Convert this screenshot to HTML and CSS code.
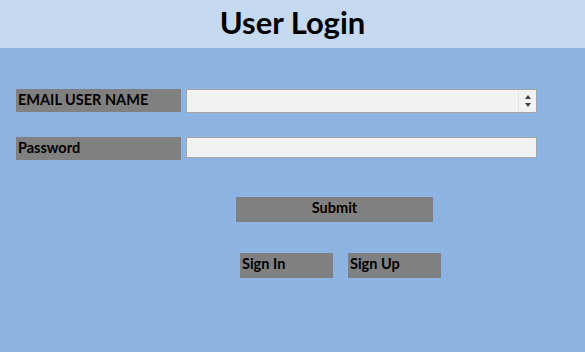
FILE: index.html
```html
<!DOCTYPE html>
<html lang="en">
<head>
    <meta charset="UTF-8">
    <meta name="viewport" content="width=device-width, initial-scale=1.0">
    <title>User Login</title>
    <link rel="stylesheet" href="styles.css">
</head>
<body>

    <div class="header">
        <h1>User Login</h1>
    </div>

    <div class="login-form">
        <div class="form-row">
            <label class="field-label" for="email">EMAIL USER NAME</label>
            <div class="text-box email-box">
                <input type="text" id="email">
                <div class="spinner">
                    <span class="arrow-up"></span>
                    <span class="arrow-down"></span>
                </div>
            </div>
        </div>

        <div class="form-row row-password">
            <label class="field-label" for="password">Password</label>
            <div class="text-box password-box">
                <input type="password" id="password">
            </div>
        </div>

        <button class="btn btn-submit">Submit</button>

        <div class="btn-row">
            <button class="btn btn-small">Sign In</button>
            <button class="btn btn-small">Sign Up</button>
        </div>
    </div>

</body>
</html>
```

FILE: styles.css
```css
body {
    margin: 0;
    padding: 0;
    font-family: Lato, "Open Sans", sans-serif;
    background-color: #8db3e2;
    height: 352px;
    overflow: hidden;
}

.header {
    background-color: #c5d9f1;
    height: 48px;
    display: flex;
    justify-content: center;
    align-items: center;
}

.header h1 {
    margin: 0 0 4px 0;
    font-size: 31px;
    font-weight: bold;
    color: #000;
}

.login-form {
    padding: 41px 0 0 16px;
}

.form-row {
    display: flex;
    gap: 5px;
    align-items: flex-start;
}

.row-password {
    margin-top: 24px;
}

.field-label {
    width: 165px;
    height: 23px;
    background-color: #808080;
    color: #000;
    font-size: 14.5px;
    font-weight: bold;
    padding: 2px 0 0 2px;
    box-sizing: border-box;
}

.text-box {
    width: 351px;
    background-color: #f2f2f2;
    border: 1px solid #a6a6a6;
    box-sizing: border-box;
    display: flex;
}

.email-box {
    height: 24px;
}

.password-box {
    height: 21px;
}

.text-box input {
    flex: 1;
    border: none;
    background: transparent;
    outline: none;
    padding: 0 4px;
    font-size: 13px;
}

.spinner {
    width: 17px;
    border-left: 1px solid #e4e4e4;
    display: flex;
    flex-direction: column;
    justify-content: space-around;
    align-items: center;
    padding: 3px 0;
}

.arrow-up {
    width: 0;
    height: 0;
    border-left: 3px solid transparent;
    border-right: 3px solid transparent;
    border-bottom: 4px solid #404040;
}

.arrow-down {
    width: 0;
    height: 0;
    border-left: 3px solid transparent;
    border-right: 3px solid transparent;
    border-top: 4px solid #404040;
}

.btn {
    background-color: #808080;
    color: #000;
    border: none;
    border-radius: 0;
    font-family: Lato, "Open Sans", sans-serif;
    font-size: 14.5px;
    font-weight: bold;
    height: 25px;
    padding: 2px 2px 0 2px;
    box-sizing: border-box;
    display: flex;
    align-items: flex-start;
    cursor: pointer;
}

.btn-submit {
    margin: 37px 0 0 220px;
    width: 197px;
    justify-content: center;
}

.btn-row {
    display: flex;
    gap: 15px;
    margin: 31px 0 0 224px;
}

.btn-small {
    width: 93px;
    justify-content: flex-start;
}
```
